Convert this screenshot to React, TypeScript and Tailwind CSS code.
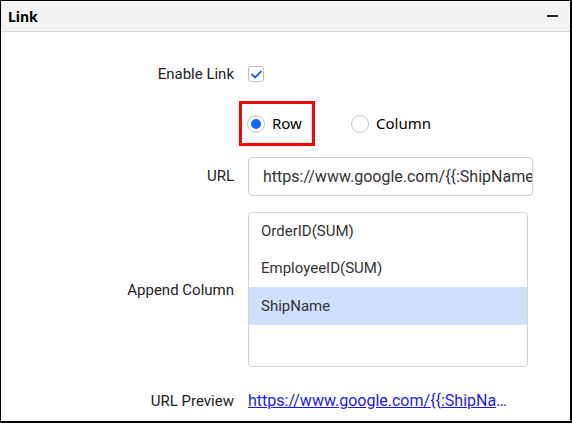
import React from 'react';

const labelCls = "w-[233px] shrink-0 text-right text-[15px] text-[#222] font-['Roboto',sans-serif]";

export default function App() {
  return (
    <div className="w-[572px] h-[423px] bg-white border-l border-t border-r-2 border-b-2 border-black overflow-hidden flex flex-col">
      {/* Header */}
      <div className="h-[31px] shrink-0 bg-[#f4f4f4] border-b border-[#d4d4d4] flex items-center justify-between pl-[7px] pr-[12px]">
        <span className="text-[14px] font-bold text-black font-['Noto_Sans',sans-serif]">Link</span>
        <span className="block w-[11px] h-[2px] bg-[#222]" />
      </div>

      {/* Enable Link */}
      <div className="mt-[33px] h-[18px] flex items-center gap-[14px]">
        <span className={labelCls}>Enable Link</span>
        <span className="w-[16px] h-[16px] border border-[#bdbdbd] rounded-[3px] flex items-center justify-center">
          <svg width="11" height="9" viewBox="0 0 11 9" fill="none">
            <path d="M1 4.5 L4 7.5 L10 1.5" stroke="#1a62f0" strokeWidth="1.8" strokeLinecap="round" strokeLinejoin="round" />
          </svg>
        </span>
      </div>

      {/* Row / Column radios */}
      <div className="mt-[18px] h-[45px] flex items-center">
        <div className="w-[238px] shrink-0" />
        <div className="h-[45px] w-[76px] border-[3px] border-[#ff0000] flex items-center pl-[5px] gap-[7px]">
          <span className="w-[18px] h-[18px] rounded-full border border-[#c4c4c4] flex items-center justify-center">
            <span className="w-[10px] h-[10px] rounded-full bg-[#0f6cf5]" />
          </span>
          <span className="text-[15px] text-black font-['Noto_Sans',sans-serif]">Row</span>
        </div>
        <div className="ml-[36px] flex items-center gap-[7px]">
          <span className="w-[18px] h-[18px] rounded-full border border-[#c4c4c4]" />
          <span className="text-[15px] text-black font-['Noto_Sans',sans-serif]">Column</span>
        </div>
      </div>

      {/* URL */}
      <div className="mt-[11px] flex items-center gap-[14px]">
        <span className={labelCls}>URL</span>
        <div className="w-[285px] h-[39px] border border-[#cccccc] rounded-[4px] flex items-center pl-[14px] overflow-hidden">
          <span className="whitespace-nowrap text-[16px] text-[#333] font-['Roboto',sans-serif]">https://www.google.com/{'{{'}:ShipName{'}}'}</span>
        </div>
      </div>

      {/* Append Column */}
      <div className="mt-[16px] flex items-center gap-[14px]">
        <span className={`${labelCls} pt-[2px]`}>Append Column</span>
        <div className="w-[280px] h-[155px] border border-[#d4d4d4] rounded-[4px] overflow-hidden flex flex-col text-[15px] text-[#333] font-['Roboto',sans-serif]">
          <div className="h-[37px] flex items-center pl-[12px]">OrderID(SUM)</div>
          <div className="h-[37px] flex items-center pl-[12px]">EmployeeID(SUM)</div>
          <div className="h-[38px] flex items-center pl-[12px] bg-[#cfe0fc]">ShipName</div>
        </div>
      </div>

      {/* URL Preview */}
      <div className="mt-[24px] h-[20px] flex items-center gap-[14px]">
        <span className={labelCls}>URL Preview</span>
        <span className="w-[266px] truncate text-[16px] text-[#1a1aee] underline font-['Roboto',sans-serif]">https://www.google.com/{'{{'}:ShipName{'}}'}</span>
      </div>
    </div>
  );
}
